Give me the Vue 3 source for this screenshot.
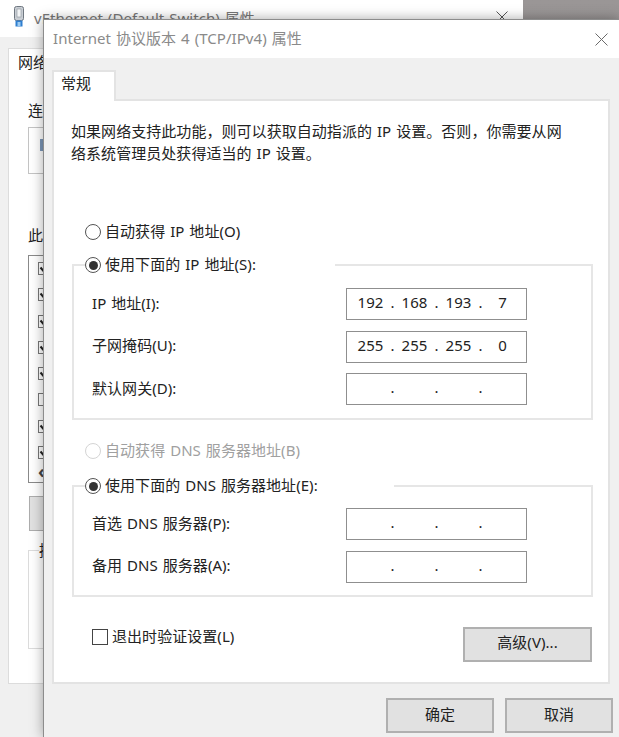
<template>
  <div class="desktop">
    <!-- window behind -->
    <div class="win-back">
      <div class="back-title">
        <svg class="adapter" width="12" height="22" viewBox="0 0 12 22">
          <rect x="1.5" y="0.5" width="9" height="14" rx="2" fill="#c9ced4" stroke="#6f7780" />
          <rect x="4" y="3" width="4" height="8" fill="#f2f4f6" stroke="#8b939b" stroke-width="0.6" />
          <rect x="2.5" y="14.5" width="7" height="6" fill="#2f7fd0" />
          <rect x="4.5" y="16" width="3" height="4" fill="#9ccbf2" />
        </svg>
        <span class="back-name">vEthernet (Default Switch) 属性</span>
        <svg class="close back-close" width="12" height="12" viewBox="0 0 12 12">
          <path d="M0.5 0.5 L11.5 11.5 M11.5 0.5 L0.5 11.5" stroke="#555" fill="none" />
        </svg>
      </div>
      <div class="back-panel">
        <div class="back-tab">网络</div>
        <div class="back-label connect">连接时使用:</div>
        <div class="adapter-box"><span class="adapter-dot"></span></div>
        <div class="back-label uses">此连接使用下列项目:</div>
        <div class="item-list">
          <span v-for="(on, i) in listChecks" :key="i" class="item-check">
            <svg v-if="on" width="11" height="11" viewBox="0 0 11 11">
              <path d="M1.5 4.5 L4 7.5 L9 2" stroke="#222" stroke-width="2" fill="none" />
            </svg>
          </span>
          <span class="scroll-arrow">‹</span>
        </div>
        <div class="back-btn"></div>
        <fieldset class="back-group">
          <legend>描述</legend>
        </fieldset>
      </div>
    </div>

    <!-- front dialog -->
    <div class="win-front">
      <div class="title-bar">
        <span class="title">Internet 协议版本 4 (TCP/IPv4) 属性</span>
        <svg class="close" width="13" height="13" viewBox="0 0 13 13">
          <path d="M0.5 0.5 L12.5 12.5 M12.5 0.5 L0.5 12.5" stroke="#6a6a6a" fill="none" />
        </svg>
      </div>
      <div class="body">
        <div class="tab">常规</div>
        <div class="panel">
          <p class="desc">如果网络支持此功能，则可以获取自动指派的 IP 设置。否则，你需要从网络系统管理员处获得适当的 IP 设置。</p>

          <label class="radio-row first">
            <span class="radio"></span>
            <span class="lift">自动获得 IP 地址(O)</span>
          </label>
          <fieldset class="group ip-group">
            <legend class="legend ip-legend">
              <span class="radio checked"></span>
              <span class="lift">使用下面的 IP 地址(S):</span>
            </legend>
            <div v-for="row in ipRows" :key="row.label" class="field-row">
              <span class="field-label lift">{{ row.label }}</span>
              <div class="ip-input">
                <template v-for="(part, i) in row.parts" :key="i">
                  <span class="octet lift">{{ part }}</span>
                  <span v-if="i < 3" class="dot lift">.</span>
                </template>
              </div>
            </div>
          </fieldset>

          <label class="radio-row disabled">
            <span class="radio"></span>
            <span class="lift">自动获得 DNS 服务器地址(B)</span>
          </label>
          <fieldset class="group dns-group">
            <legend class="legend dns-legend">
              <span class="radio checked"></span>
              <span class="lift">使用下面的 DNS 服务器地址(E):</span>
            </legend>
            <div v-for="row in dnsRows" :key="row.label" class="field-row">
              <span class="field-label lift">{{ row.label }}</span>
              <div class="ip-input">
                <template v-for="(part, i) in row.parts" :key="i">
                  <span class="octet">{{ part }}</span>
                  <span v-if="i < 3" class="dot lift">.</span>
                </template>
              </div>
            </div>
          </fieldset>

          <div class="bottom-row">
            <label class="check-row">
              <span class="checkbox"></span>
              <span class="check-text">退出时验证设置(L)</span>
            </label>
            <button class="btn advanced"><span class="lift-btn">高级(V)...</span></button>
          </div>
        </div>
        <div class="footer">
          <button class="btn action"><span class="lift-btn">确定</span></button>
          <button class="btn action"><span class="lift-btn">取消</span></button>
        </div>
      </div>
    </div>
  </div>
</template>

<script setup>
const listChecks = [true, true, true, true, true, false, true, true]

const empty = ['', '', '', '']

const ipRows = [
  { label: 'IP 地址(I):', parts: ['192', '168', '193', '7'] },
  { label: '子网掩码(U):', parts: ['255', '255', '255', '0'] },
  { label: '默认网关(D):', parts: empty }
]

const dnsRows = [
  { label: '首选 DNS 服务器(P):', parts: empty },
  { label: '备用 DNS 服务器(A):', parts: empty }
]
</script>

<style>
html, body {
  margin: 0;
  overflow: hidden;
}
</style>

<style scoped>
.desktop {
  position: relative;
  width: 619px;
  height: 737px;
  overflow: hidden;
  background: linear-gradient(180deg, #9a9696, #86827f);
  font-family: "Noto Sans", "Noto Sans CJK SC", sans-serif;
  font-size: 15px;
  letter-spacing: 0.05px;
  word-spacing: 1px;
  color: #222;
}

.lift {
  margin-bottom: 4px;
}
.lift-btn {
  display: block;
  margin-bottom: 5px;
}

/* back window */
.win-back {
  position: absolute;
  left: 0;
  top: 0;
  width: 523px;
  height: 737px;
  background: #f0f0f0;
}
.back-title {
  height: 37px;
  background: #fff;
  display: flex;
  align-items: center;
  padding-left: 13px;
  position: relative;
}
.adapter {
  margin-right: 9px;
  margin-top: -3px;
}
.back-name {
  color: #777;
  margin-top: -3px;
}
.back-close {
  position: absolute;
  left: 496px;
  top: 11px;
}
.back-panel {
  margin: 11px 0 0 8px;
  width: 500px;
  height: 636px;
  box-sizing: border-box;
  border: 1px solid #dcdcdc;
  background: #fff;
  padding-left: 19px;
}
.back-tab {
  margin: 2px 0 0 -10px;
  line-height: 22px;
}
.back-label {
  line-height: 20px;
}
.connect {
  margin-top: 27px;
}
.adapter-box {
  margin-top: 7px;
  width: 300px;
  height: 47px;
  box-sizing: border-box;
  border: 1px solid #c4c4c4;
  padding: 11px 0 0 11px;
}
.adapter-dot {
  display: block;
  width: 4px;
  height: 12px;
  background: #7c97b8;
}
.uses {
  margin-top: 51px;
}
.item-list {
  margin-top: 10px;
  width: 400px;
  height: 228px;
  box-sizing: border-box;
  border: 1px solid #8a8a8a;
  padding: 6px 0 0 9px;
  position: relative;
}
.item-check {
  display: block;
  width: 13px;
  height: 13px;
  box-sizing: border-box;
  border: 1px solid #777;
  margin-bottom: 13.3px;
}
.item-check svg {
  display: block;
}
.scroll-arrow {
  position: absolute;
  left: 9px;
  bottom: 0;
  font-size: 18px;
  line-height: 22px;
  font-weight: 700;
  color: #444;
}
.back-btn {
  margin-top: 13px;
  width: 120px;
  height: 35px;
  margin-left: 1px;
  box-sizing: border-box;
  border: 1px solid #adadad;
  background: #e1e1e1;
}
.back-group {
  margin: 9px 0 0;
  padding: 0;
  width: 440px;
  height: 109px;
  box-sizing: border-box;
  border: 1px solid #dcdcdc;
}
.back-group legend {
  margin-left: 10px;
  padding: 0;
  line-height: 20px;
}

/* front dialog */
.win-front {
  position: absolute;
  left: 43px;
  top: 19px;
  width: 576px;
  height: 718px;
  box-sizing: border-box;
  border-left: 1px solid #8c8c8c;
  border-top: 1px solid #8c8c8c;
  background: #f0f0f0;
  box-shadow: 0 0 12px rgba(0, 0, 0, 0.35);
}
.title-bar {
  height: 38px;
  background: #fff;
  display: flex;
  align-items: center;
  justify-content: space-between;
  padding: 0 11px 0 9px;
}
.title {
  color: #8a8a8a;
  margin-bottom: 4px;
}
.body {
  padding: 12px 9px 0 8px;
}
.tab {
  width: 64px;
  height: 31px;
  box-sizing: border-box;
  border: 2px solid #e3e3e3;
  border-bottom: 0;
  background: #fff;
  line-height: 22px;
  padding-left: 7px;
  position: relative;
  z-index: 1;
  margin-bottom: -2px;
}
.panel {
  height: 585px;
  box-sizing: border-box;
  border: 2px solid #e3e3e3;
  background: #fff;
  padding: 19px 15px 0 18px;
}
.desc {
  margin: 0 0 0 -1px;
  width: 494px;
  line-height: 22px;
}
.radio-row {
  display: flex;
  align-items: center;
  gap: 4px;
  height: 24px;
  margin-left: 13px;
}
.radio-row.first {
  margin-top: 56px;
  margin-bottom: 9px;
}
.radio-row.disabled {
  margin-top: 19px;
  margin-bottom: 11px;
  color: #a0a0a0;
}
.radio-row.disabled .radio {
  border-color: #d4d4d4;
}
.radio {
  width: 16px;
  height: 16px;
  flex: none;
  box-sizing: border-box;
  border: 1.5px solid #555;
  border-radius: 50%;
  background: #fff;
  position: relative;
}
.radio.checked::after {
  content: "";
  position: absolute;
  inset: 2.5px;
  border-radius: 50%;
  background: #333;
}
.group {
  margin: 0;
  width: 521px;
  min-width: 0;
  box-sizing: border-box;
  border: 2px solid #e6e6e6;
  padding: 11px 0 13px 18px;
}
.dns-group {
  padding: 10px 0 12px 18px;
}
.legend {
  display: flex;
  align-items: center;
  gap: 4px;
  height: 24px;
  margin-left: -7px;
  padding: 0;
  box-sizing: border-box;
  background: #fff;
}
.ip-legend {
  width: 250px;
}
.dns-legend {
  width: 309px;
}
.field-row {
  display: flex;
  align-items: center;
  height: 32px;
}
.field-row + .field-row {
  margin-top: 10.5px;
}
.field-label {
  width: 254px;
  flex: none;
}
.ip-input {
  width: 181px;
  height: 32px;
  box-sizing: border-box;
  border: 1.5px solid #8f8f8f;
  display: flex;
  align-items: center;
  padding-left: 3.5px;
  line-height: 28px;
}
.octet {
  width: 40px;
  text-align: center;
}
.dot {
  width: 4px;
  text-align: center;
}
.bottom-row {
  display: flex;
  justify-content: space-between;
  align-items: flex-start;
  margin-top: 30px;
  padding-left: 20px;
  width: 520px;
  box-sizing: border-box;
}
.check-row {
  display: flex;
  align-items: center;
  gap: 4px;
  height: 20px;
}
.check-text {
  margin-bottom: 3px;
}
.checkbox {
  width: 16px;
  height: 16px;
  box-sizing: border-box;
  border: 1.5px solid #444;
}
.btn {
  box-sizing: border-box;
  border: 2px solid #b0b0b0;
  background: #e1e1e1;
  font: inherit;
  word-spacing: inherit;
  letter-spacing: inherit;
  color: #222;
  padding: 0;
}
.advanced {
  width: 129px;
  height: 35px;
}
.footer {
  display: flex;
  justify-content: flex-end;
  gap: 11px;
  margin: 14px -3px 0 0;
}
.action {
  width: 108px;
  height: 35px;
}
</style>
